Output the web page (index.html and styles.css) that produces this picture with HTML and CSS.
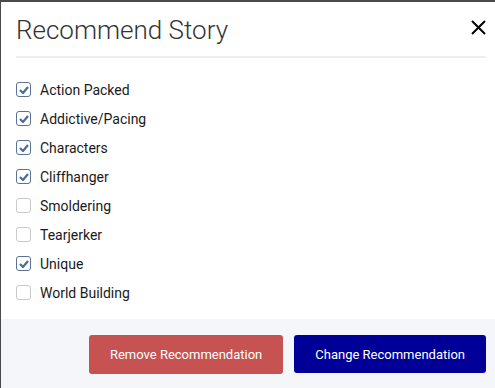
FILE: index.html
```html
<!DOCTYPE html>
<html lang="en">
<head>
    <meta charset="UTF-8">
    <meta name="viewport" content="width=device-width, initial-scale=1.0">
    <title>Recommend Story</title>
    <link rel="stylesheet" href="styles.css">
</head>
<body>

<div class="modal">
    <div class="modal-header">
        <h1>Recommend Story</h1>
        <button class="close-btn" aria-label="Close">
            <svg width="15" height="15" viewBox="0 0 15 15">
                <path d="M1 1 L14 14 M14 1 L1 14" stroke="#000" stroke-width="2" fill="none"/>
            </svg>
        </button>
    </div>

    <ul class="tags">
        <li class="checked"><span class="box"><svg width="10" height="8" viewBox="0 0 10 8"><path d="M1 4 L4 7 L9 1" stroke="#4a6c9b" stroke-width="2.2" fill="none"/></svg></span>Action Packed</li>
        <li class="checked"><span class="box"><svg width="10" height="8" viewBox="0 0 10 8"><path d="M1 4 L4 7 L9 1" stroke="#4a6c9b" stroke-width="2.2" fill="none"/></svg></span>Addictive/Pacing</li>
        <li class="checked"><span class="box"><svg width="10" height="8" viewBox="0 0 10 8"><path d="M1 4 L4 7 L9 1" stroke="#4a6c9b" stroke-width="2.2" fill="none"/></svg></span>Characters</li>
        <li class="checked"><span class="box"><svg width="10" height="8" viewBox="0 0 10 8"><path d="M1 4 L4 7 L9 1" stroke="#4a6c9b" stroke-width="2.2" fill="none"/></svg></span>Cliffhanger</li>
        <li><span class="box"></span>Smoldering</li>
        <li><span class="box"></span>Tearjerker</li>
        <li class="checked"><span class="box"><svg width="10" height="8" viewBox="0 0 10 8"><path d="M1 4 L4 7 L9 1" stroke="#4a6c9b" stroke-width="2.2" fill="none"/></svg></span>Unique</li>
        <li><span class="box"></span>World Building</li>
    </ul>

    <div class="modal-footer">
        <button class="btn btn-remove">Remove Recommendation</button>
        <button class="btn btn-change">Change Recommendation</button>
    </div>
</div>

</body>
</html>
```

FILE: styles.css
```css
body {
    margin: 0;
    background-color: #4a4a4a;
    font-family: Roboto, "Liberation Sans", sans-serif;
}
.modal {
    margin: 2px 0 0 1px;
    height: 386px;
    background: #fff;
    display: flex;
    flex-direction: column;
}
.modal-header {
    display: flex;
    justify-content: space-between;
    align-items: flex-start;
    margin: 0 9px 0 15px;
    padding: 12px 0 10px 0;
    border-bottom: 2px solid #eeeeee;
}
.modal-header h1 {
    margin: 0;
    font-size: 26px;
    line-height: 32px;
    font-weight: 300;
    color: #333;
}
.close-btn {
    background: none;
    border: none;
    padding: 0;
    margin-top: 6px;
    width: 15px;
    height: 15px;
    cursor: pointer;
}
.close-btn svg {
    display: block;
}
.tags {
    list-style: none;
    margin: 0;
    padding: 17px 0 12px 15px;
}
.tags li {
    display: flex;
    align-items: center;
    height: 29px;
    font-size: 14px;
    color: #1a1a1a;
}
.box {
    box-sizing: border-box;
    width: 15px;
    height: 15px;
    border: 1.5px solid #c9c9c9;
    border-radius: 3px;
    margin-right: 9px;
    display: flex;
    align-items: center;
    justify-content: center;
}
.checked .box {
    border-color: #5a7294;
}
.modal-footer {
    flex: 1;
    background-color: #f5f6fa;
    display: flex;
    justify-content: flex-end;
    align-items: flex-start;
    gap: 11px;
    padding: 16px 9px 0 0;
}
.btn {
    border: none;
    border-radius: 3px;
    height: 38px;
    padding: 0 21px;
    color: #fff;
    font-family: Roboto, "Liberation Sans", sans-serif;
    font-size: 13px;
    cursor: pointer;
}
.btn-remove {
    background-color: #c75252;
    height: 39px;
}
.btn-change {
    background-color: #000099;
}
```
